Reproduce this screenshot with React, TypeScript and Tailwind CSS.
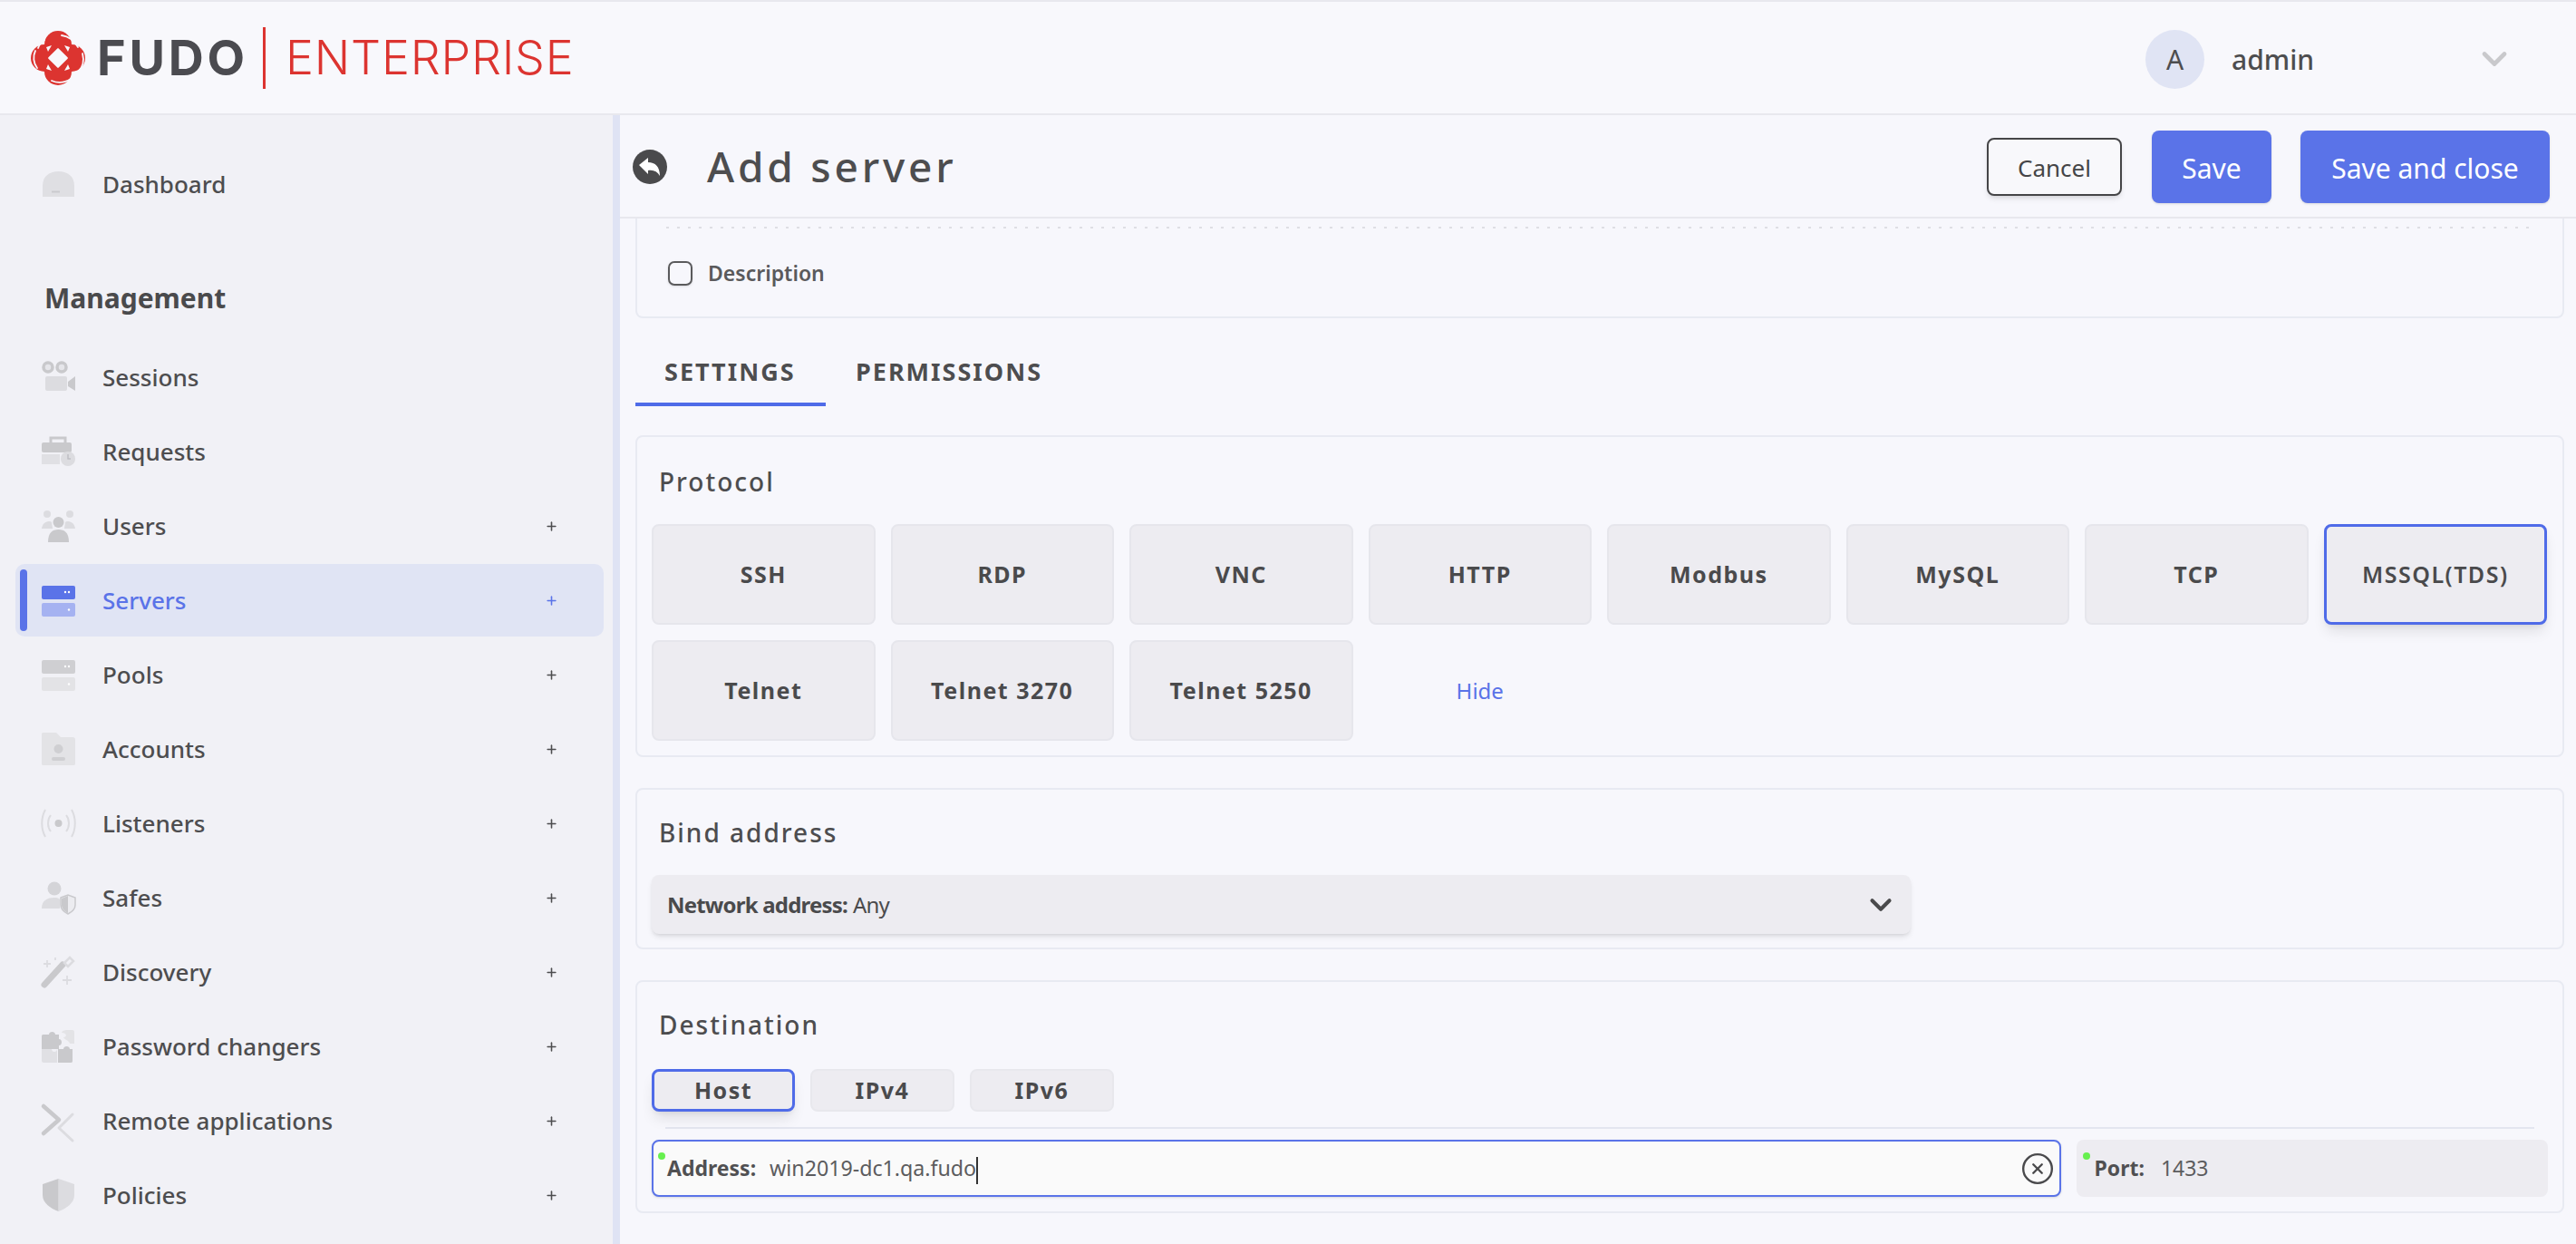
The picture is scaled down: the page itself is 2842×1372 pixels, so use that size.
import { ChevronDown, CircleX, Plus } from "lucide-react";
import type { ReactNode } from "react";

const G = "#c9c9cc";
const L = "#dcdce0";

const Svg = ({ children }: { children: ReactNode }) => (
  <svg viewBox="0 0 37 36" className="w-[37px] h-[36px] shrink-0 overflow-visible">
    {children}
  </svg>
);

const ServerIcon = ({ dark, light }: { dark: string; light: string }) => (
  <Svg>
    <rect x="0" y="2" width="37" height="15" rx="2" fill={dark} />
    <rect x="0" y="21" width="37" height="15" rx="2" fill={light} />
    <circle cx="26" cy="9" r="1.2" fill="#fff" />
    <circle cx="30" cy="9" r="1.2" fill="#fff" />
    <circle cx="30" cy="28.5" r="1.2" fill="#fff" />
  </Svg>
);

const icons: Record<string, ReactNode> = {
  Dashboard: (
    <Svg>
      <path d="M1 32V20C1 9 9 4 18.500 4S36 9 36 20V32Z" fill="#dfdfe3" />
      <path d="M11 26.500H20" stroke="#cacace" strokeWidth="2" />
    </Svg>
  ),
  Sessions: (
    <Svg>
      <circle cx="7" cy="7" r="5" fill="#e6e6ea" stroke={G} strokeWidth="3.500" />
      <circle cx="22" cy="7" r="5" fill="#e6e6ea" stroke={G} strokeWidth="3.500" />
      <rect x="4" y="17" width="24" height="16" rx="2" fill={L} />
      <path d="M29 23L37 17V33L29 28Z" fill={G} />
    </Svg>
  ),
  Requests: (
    <Svg>
      <path d="M10 8V3H26V8" fill="none" stroke={G} strokeWidth="3" />
      <rect x="0" y="8" width="33" height="11" rx="2" fill={G} />
      <path d="M0 21H20V32H0Z" fill="#e0e0e4" />
      <circle cx="29" cy="26" r="8" fill="#dcdce0" />
      <path d="M29 21V26H32" fill="none" stroke="#bfbfc4" strokeWidth="1.500" />
    </Svg>
  ),
  Users: (
    <Svg>
      <circle cx="6" cy="5" r="4" fill={L} />
      <circle cx="31" cy="5" r="4" fill={L} />
      <path d="M0 21C1 13 9 12 11 14L12 21ZM37 21C36 13 28 12 26 14L25 21Z" fill={L} />
      <circle cx="18.500" cy="14" r="6" fill={G} />
      <path d="M7 36C7 25 12 22 18.500 22S30 25 30 36Z" fill={G} />
    </Svg>
  ),
  Pools: <ServerIcon dark="#cfcfd2" light="#e3e3e6" />,
  Servers: <ServerIcon dark="#5a73e8" light="#a5b2f1" />,
  Accounts: (
    <Svg>
      <path d="M0 2C0 0 1 0 2 0H16L21 5H34C36 5 37 6 37 8V34C37 36 36 36 34 36H2C1 36 0 36 0 34Z" fill="#e3e3e6" />
      <circle cx="18.500" cy="18" r="5" fill="#cfcfd2" />
      <rect x="11" y="27" width="15" height="4" rx="2" fill="#cfcfd2" />
    </Svg>
  ),
  Listeners: (
    <Svg>
      <circle cx="18.500" cy="18" r="4" fill={G} />
      <path d="M10 9C6 14 6 22 10 27M27 9C31 14 31 22 27 27" fill="none" stroke={L} strokeWidth="2" />
      <path d="M4 3C-1 12 -1 24 4 33M33 3C38 12 38 24 33 33" fill="none" stroke={L} strokeWidth="2" />
    </Svg>
  ),
  Safes: (
    <Svg>
      <circle cx="14" cy="8" r="7.500" fill="#d4d4d8" />
      <path d="M0 30C0 21 6 18 14 18C17 18 19 18.500 20 20V30Z" fill={L} />
      <path d="M21 18L29 15L37 18V26C37 31 33 34 29 36C25 34 21 31 21 26Z" fill="#ececf0" stroke={G} strokeWidth="1.500" />
      <path d="M29 16V35C25 33 22 30 22 26V19Z" fill={G} />
    </Svg>
  ),
  Discovery: (
    <Svg>
      <path d="M3 32L23 10" stroke={G} strokeWidth="7" strokeLinecap="round" />
      <path d="M25 8L31 2L35 6L29 12Z" fill="none" stroke={L} strokeWidth="2.500" />
      <path d="M6 5V13M2 9H10M28 22V32M23 27H33M15 2V5" stroke={L} strokeWidth="1.800" />
    </Svg>
  ),
  "Password changers": (
    <Svg>
      <path d="M0 7C0 5 1 5 3 5H8C8 1 15 1 15 5H19V10C23 10 23 17 19 17V21H0Z" fill={G} />
      <path d="M0 21H11C11 25 17 25 17 21V36H2C1 36 0 35 0 34Z" fill="#e0e0e4" />
      <path d="M18 21H24C24 17 31 17 31 21H34V34C34 36 33 36 31 36H18Z" fill={G} />
      <path d="M22 3C23 0 27 0 28 0H33C36 0 36 1 36 3V15H31C30 11 25 11 24 8C28 8 28 3 22 3Z" fill="#e3e3e6" />
    </Svg>
  ),
  "Remote applications": (
    <Svg>
      <path d="M2 2L19 17L2 32" fill="none" stroke={G} strokeWidth="4.500" strokeLinecap="round" strokeLinejoin="round" />
      <path d="M34 11L19 26L34 40" fill="none" stroke={L} strokeWidth="3" strokeLinecap="round" strokeLinejoin="round" />
    </Svg>
  ),
  Policies: (
    <Svg>
      <path d="M18.500 0L36 6V18C36 27 27 33 18.500 36Z" fill={L} />
      <path d="M18.500 0L1 6V18C1 27 10 33 18.500 36Z" fill={G} />
    </Svg>
  ),
};

const menu = [
  { label: "Sessions" },
  { label: "Requests" },
  { label: "Users", plus: true },
  { label: "Servers", plus: true, active: true },
  { label: "Pools", plus: true },
  { label: "Accounts", plus: true },
  { label: "Listeners", plus: true },
  { label: "Safes", plus: true },
  { label: "Discovery", plus: true },
  { label: "Password changers", plus: true },
  { label: "Remote applications", plus: true },
  { label: "Policies", plus: true },
];

const protocols = ["SSH", "RDP", "VNC", "HTTP", "Modbus", "MySQL", "TCP", "MSSQL(TDS)", "Telnet", "Telnet 3270", "Telnet 5250"];

const MenuRow = ({ label, plus, active }: { label: string; plus?: boolean; active?: boolean }) => (
  <div className={`relative h-[80px] ml-[17px] w-[649px] pl-[29px] pr-[50px] flex items-center rounded-[10px] ${active ? "bg-[#e0e4f4] text-[#5a73e8]" : "text-[#4d4d4f]"}`}>
    {active && <span className="absolute left-[5px] top-[6px] bottom-[6px] w-[8px] rounded-full bg-[#5a73e8]" />}
    {icons[label]}
    <span className="ml-[30px] flex-1 text-[26px] font-medium">{label}</span>
    {plus && <Plus size={15} strokeWidth={2.5} />}
  </div>
);

const Sidebar = () => (
  <aside className="w-[684px] shrink-0 border-r-[8px] border-[#dfe3f4] bg-[#f1f1f6] pt-[36px]">
    <MenuRow label="Dashboard" />
    <div className="mt-[60px] mb-[23px] h-[50px] pl-[49px] flex items-center text-[30px] font-bold text-[#4a4a4c]">Management</div>
    <div className="flex flex-col gap-[2px]">
      {menu.map((m) => (
        <MenuRow key={m.label} {...m} />
      ))}
    </div>
  </aside>
);

const Card = ({ title, className, children }: { title: string; className: string; children: ReactNode }) => (
  <section className={`rounded-[8px] border-2 border-[#e8eaf2] px-[16px] ${className}`}>
    <h2 className="text-[28px] leading-[40px] font-medium tracking-[2px] pl-[8px] text-[#4d4d4f]">{title}</h2>
    {children}
  </section>
);

const App = () => (
  <div className="w-[2842px] h-[1372px] flex flex-col overflow-hidden bg-[#f7f7fc] font-['Noto_Sans',sans-serif]">
    <header className="h-[127px] shrink-0 flex items-center border-t-2 border-b-2 border-[#e8e8ee] bg-[#f8f8fc] relative">
      <svg viewBox="0 0 64 64" className="ml-[32px] w-[64px] h-[64px] shrink-0">
        <g fill="#dc3430">
          <circle cx="32" cy="17" r="15" />
          <circle cx="47" cy="32" r="15" />
          <circle cx="32" cy="47" r="15" />
          <circle cx="17" cy="32" r="15" />
        </g>
        <g fill="none" stroke="#f8f8fc" strokeWidth="1.800" strokeLinecap="round">
          <path d="M36 7C44 8 50 13 54 20" />
          <path d="M7 24C4 30 5 38 9 43" />
          <path d="M25 57C32 60 40 59 46 55" />
          <path d="M59 27C61 35 59 42 55 46" />
          <path d="M17 12C13 15 11 18 10 21" />
        </g>
        <g fill="#f8f8fc">
          <path d="M19 20L25 18L21 25Z" />
          <path d="M45 20L39 18L43 25Z" />
          <path d="M19 44L25 46L21 39Z" />
          <path d="M45 44L39 46L43 39Z" />
          <rect x="24" y="24" width="16" height="16" rx="1" transform="rotate(45 32 32)" />
        </g>
      </svg>
      <span className="ml-[11px] w-[175px] text-[54px] leading-none font-bold tracking-[3.800px] text-[#4b4b50] font-['Inter',sans-serif]">FUDO</span>
      <span className="ml-[8px] w-[3px] h-[68px] bg-[#dc3430]" />
      <span className="ml-[22px] text-[52px] leading-none font-light tracking-[0.8px] text-[#dc3430] font-['Inter',sans-serif]">ENTERPRISE</span>
      <div className="ml-auto mt-[3px] flex items-center">
        <span className="w-[65px] h-[65px] rounded-full bg-[#e0e4f4] flex items-center justify-center text-[30px] text-[#4d4d4f]">A</span>
        <span className="ml-[30px] w-[268px] text-[30px] font-medium text-[#4d4d4f]">admin</span>
        <ChevronDown size={44} strokeWidth={2.6} className="text-[#c9c9cc] mr-[68px]" />
      </div>
    </header>
    <div className="flex flex-1 min-h-0">
      <Sidebar />
      <main className="flex-1 min-w-0">
        <div className="h-[114px] pt-[2px] border-b-2 border-[#e8e8ee] flex items-center pl-[14px] pr-[29px]">
          <svg viewBox="0 0 38 38" className="w-[38px] h-[38px]">
            <circle cx="19" cy="19" r="19" fill="#4a4a4c" />
            <path d="M7 17L17 9V14C25 14 30 19 30 29C27 24 23 22 17 23V27Z" fill="#fff" />
          </svg>
          <h1 className="ml-[44px] mb-[2px] text-[46px] font-medium tracking-[3.800px] text-[#4d4d4f]">Add server</h1>
          <div className="ml-auto flex items-center">
            <button className="w-[149px] h-[64px] pt-[2px] rounded-[8px] border-2 border-[#454547] bg-[#f8f8fb] text-[26px] text-[#454547] shadow-md">Cancel</button>
            <button className="ml-[33px] w-[132px] h-[80px] pt-[3px] rounded-[8px] bg-[#5a73e8] text-[30px] text-white shadow-sm">Save</button>
            <button className="ml-[32px] w-[275px] h-[80px] pt-[3px] rounded-[8px] bg-[#5a73e8] text-[30px] text-white shadow-sm">Save and close</button>
          </div>
        </div>
        <div className="pl-[17px] pr-[13px]">
          <div className="h-[110px] rounded-b-[8px] border-2 border-t-0 border-[#e8eaf2] pt-[9px]">
            <div className="mx-[32px] h-[2px] bg-[repeating-linear-gradient(90deg,#dedee4_0_3px,transparent_3px_12px)]" />
            <label className="mt-[32px] ml-[34px] flex items-center">
              <span className="w-[27px] h-[27px] rounded-[7px] border-2 border-[#5a5a5c] shadow-sm" />
              <span className="ml-[17px] text-[23px] font-semibold text-[#5a5a5c]">Description</span>
            </label>
          </div>
          <div className="mt-[30px] h-[67px] flex items-start text-[27px] font-bold tracking-[2px] text-[#4d4d4f]">
            <div className="w-[210px] h-[67px] pl-[32px] pt-[9px] border-b-4 border-[#4f6be8]">SETTINGS</div>
            <div className="ml-[33px] pt-[9px]">PERMISSIONS</div>
          </div>
          <Card title="Protocol" className="mt-[32px] h-[355px] pt-[29px]">
            <div className="mt-[27px] grid grid-cols-[repeat(8,246.500px)] auto-rows-[111px] gap-[17px] text-[25px] font-bold tracking-[1.5px] text-[#4a4a4c]">
              {protocols.map((p) => (
                <button key={p} className={`rounded-[8px] bg-[#edecf1] ${p === "MSSQL(TDS)" ? "border-[3px] border-[#4f6be8] font-semibold shadow-lg" : "border-2 border-[#e6e6ec]"}`}>
                  {p}
                </button>
              ))}
              <span className="flex items-center justify-center text-[24px] font-normal tracking-normal text-[#5a73e8]">Hide</span>
            </div>
          </Card>
          <Card title="Bind address" className="mt-[34px] h-[178px] pt-[27px]">
            <div className="mt-[27px] w-[1389px] h-[65px] rounded-[8px] bg-[#edecf1] shadow-md flex items-center pl-[17px] pr-[14px] text-[24px] tracking-[-0.8px] text-[#4a4a4c]">
              <span className="font-bold">Network address:</span>
              <span className="ml-[6px]">Any</span>
              <ChevronDown size={38} strokeWidth={2.6} className="ml-auto" />
            </div>
          </Card>
          <Card title="Destination" className="mt-[34px] h-[257px] pt-[27px]">
            <div className="mt-[29px] flex gap-[17px] text-[25px] font-bold tracking-[1.5px] text-[#4a4a4c]">
              <button className="w-[158px] h-[47px] rounded-[8px] bg-[#edecf1] border-[3px] border-[#4f6be8] shadow-lg">Host</button>
              <button className="w-[159px] h-[47px] rounded-[8px] bg-[#edecf1] border-2 border-[#e8e8ed]">IPv4</button>
              <button className="w-[159px] h-[47px] rounded-[8px] bg-[#edecf1] border-2 border-[#e8e8ed]">IPv6</button>
            </div>
            <div className="mt-[17px] ml-[15px] mr-[15px] border-t-2 border-[#e4e6f0]" />
            <div className="mt-[12px] flex gap-[17px]">
              <div className="relative w-[1557px] h-[63px] rounded-[8px] flex items-center pl-[15px] bg-[#fafafa] border-2 border-[#5a73e8] shadow-sm">
                <span className="absolute left-[5px] top-[12px] w-[8px] h-[8px] rounded-full bg-[#67f04f]" />
                <span className="text-[23px] font-bold text-[#505052]">Address:</span>
                <span className="ml-[15px] flex-1 text-[23.200px] text-[#5c5c5e]">
                  win2019-dc1.qa.fudo<span className="inline-block w-[2px] h-[30px] bg-[#333] align-middle" />
                </span>
                <CircleX size={38} strokeWidth={1.5} className="mr-[5px] text-[#4a4a4c]" />
              </div>
              <div className="relative w-[520px] h-[63px] rounded-[8px] flex items-center pl-[19px] bg-[#edecf1]">
                <span className="absolute left-[7px] top-[14px] w-[8px] h-[8px] rounded-full bg-[#67f04f]" />
                <span className="text-[23px] font-bold text-[#505052]">Port:</span>
                <span className="ml-[18px] text-[23px] text-[#5c5c5e]">1433</span>
              </div>
            </div>
          </Card>
        </div>
      </main>
    </div>
  </div>
);

export default App;
